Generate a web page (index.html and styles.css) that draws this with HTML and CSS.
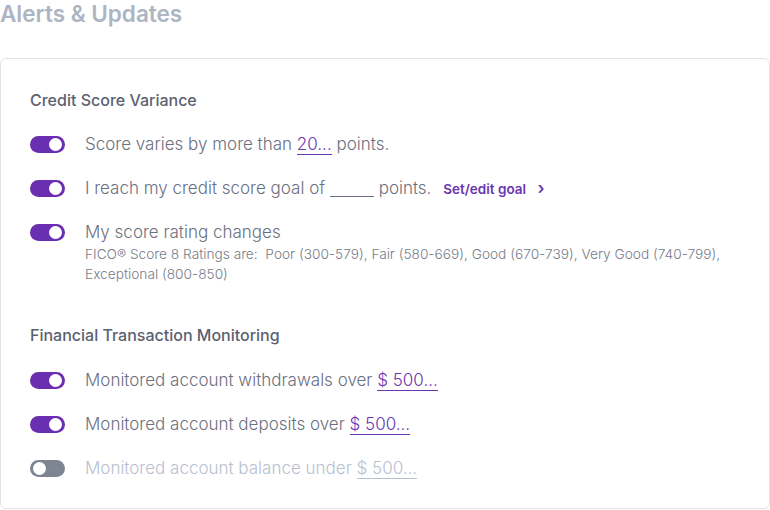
FILE: index.html
```html
<!DOCTYPE html>
<html>
<head>
    <meta charset="utf-8">
    <title>Alerts &amp; Updates</title>
    <link rel="stylesheet" href="styles.css">
</head>
<body>
    <h1 class="page-title">Alerts &amp; Updates</h1>

    <div class="card">
        <h2 class="section-title">Credit Score Variance</h2>

        <div class="alert-row">
            <span class="toggle on"></span>
            <p class="alert-text">Score varies by more than <a class="value-link">20...</a> points.</p>
        </div>

        <div class="alert-row">
            <span class="toggle on"></span>
            <p class="alert-text">I reach my credit score goal of <span class="blank"></span> points.
                <a class="goal-link">Set/edit goal <span class="chevron">&#8250;</span></a></p>
        </div>

        <div class="alert-row top">
            <span class="toggle on"></span>
            <div>
                <p class="alert-text">My score rating changes</p>
                <p class="alert-note">FICO&reg; Score 8 Ratings are:&nbsp; Poor (300-579), Fair (580-669), Good (670-739), Very Good (740-799), Exceptional (800-850)</p>
            </div>
        </div>

        <h2 class="section-title second">Financial Transaction Monitoring</h2>

        <div class="alert-row">
            <span class="toggle on"></span>
            <p class="alert-text">Monitored account withdrawals over <a class="value-link">$ 500...</a></p>
        </div>

        <div class="alert-row">
            <span class="toggle on"></span>
            <p class="alert-text">Monitored account deposits over <a class="value-link">$ 500...</a></p>
        </div>

        <div class="alert-row disabled">
            <span class="toggle"></span>
            <p class="alert-text">Monitored account balance under <a class="value-link">$ 500...</a></p>
        </div>
    </div>
</body>
</html>
```

FILE: styles.css
```css
/* Page */
body {
    margin: 0;
    font-family: 'Inter', 'Noto Sans', sans-serif;
    background-color: #ffffff;
    color: #6b7080;
}

.page-title {
    margin: 0;
    height: 58px;
    font-size: 22.5px;
    font-weight: 600;
    line-height: 28px;
    color: #adb4c2;
}

/* Card */
.card {
    border: 1px solid #e2e3e8;
    border-radius: 6px;
    padding: 29px 29px 18px 29px;
    width: 710px;
}

.section-title {
    margin: 0 0 10px 0;
    font-size: 16px;
    font-weight: 500;
    line-height: 24px;
    color: #5b6171;
}

.section-title.second {
    margin-top: 39px;
    margin-bottom: 11px;
}

/* Rows */
.alert-row {
    display: flex;
    align-items: center;
    gap: 20px;
    height: 44px;
}

.alert-row.top {
    align-items: flex-start;
    height: auto;
    padding-top: 11px;
}

.alert-row.top .toggle {
    margin-top: 3px;
}

.alert-text {
    margin: 0;
    font-size: 17px;
    font-weight: 300;
    line-height: 22px;
    color: #6b7080;
}

.alert-note {
    margin: 1px 0 0 0;
    font-size: 13.7px;
    font-weight: 300;
    line-height: 20px;
    color: #777c8a;
}

.value-link {
    color: #6a35b0;
    border-bottom: 1px solid #6a35b0;
    text-decoration: none;
}

.blank {
    display: inline-block;
    width: 44px;
    border-bottom: 1px solid #6b7080;
    vertical-align: -3px;
}

.goal-link {
    margin-left: 7px;
    font-size: 13.5px;
    font-weight: 600;
    color: #6a35b0;
}

.chevron {
    margin-left: 8px;
    font-size: 17px;
}

/* Toggle switch */
.toggle {
    position: relative;
    flex: none;
    width: 35px;
    height: 17px;
    border-radius: 9px;
    background-color: #7d8593;
}

.toggle::after {
    content: "";
    position: absolute;
    top: 2px;
    left: 3px;
    width: 13px;
    height: 13px;
    border-radius: 50%;
    background-color: #ffffff;
}

.toggle.on {
    background-color: #6a2fb0;
}

.toggle.on::after {
    left: 19px;
}

/* Disabled row */
.alert-row.disabled .alert-text {
    color: #b8c0d0;
}

.alert-row.disabled .value-link {
    color: #b8c0d0;
    border-bottom-color: #b8c0d0;
}
```
